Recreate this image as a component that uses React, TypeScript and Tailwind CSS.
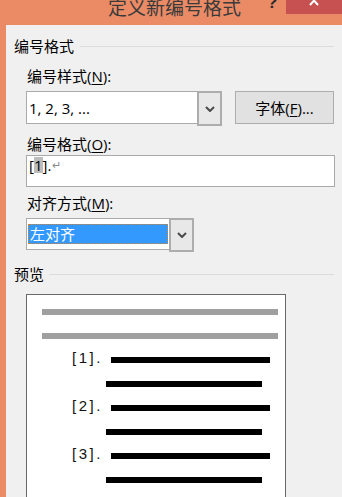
export default function App() {
  const Chevron = () => (
    <svg width="10" height="6" viewBox="0 0 10 6">
      <path d="M1 1 L5 5 L9 1" fill="none" stroke="#4a4a4a" strokeWidth="2" />
    </svg>
  );
  const numbered = ["[1].", "[2].", "[3]."];
  return (
    <div className="w-[342px] h-[497px] overflow-hidden bg-[#EB8B66] flex flex-col font-['Open_Sans','Noto_Sans_CJK_SC',sans-serif] text-[15px] text-black">
      {/* title bar */}
      <div className="h-[25px] shrink-0 flex items-start overflow-hidden">
        <div className="w-[108px] shrink-0" />
        <div className="text-[19px] leading-[19px] -mt-[3px] text-[#3A3A3A] font-['Noto_Sans_CJK_SC',sans-serif] whitespace-nowrap">
          定义新编号格式
        </div>
        <div className="ml-[26px] -mt-[6px] text-[17px] leading-[17px] font-bold text-[#2a2a2a] font-['Liberation_Sans',sans-serif]">
          ?
        </div>
        <div className="ml-auto w-[56px] h-[14px] bg-[#C75050] shrink-0">
          <svg width="56" height="14" viewBox="0 0 56 14">
            <path d="M24 -4 L32 5 M32 -4 L24 5" stroke="#ffffff" strokeWidth="2" />
          </svg>
        </div>
      </div>

      {/* content */}
      <div className="flex-1 ml-[6px] bg-[#F0F0F0] flex flex-col">
        <div className="mt-[11px] h-[20px] flex items-center pl-[8px] pr-[8px]">
          <span className="leading-[20px]">编号格式</span>
          <div className="flex-1 h-px bg-[#DCDCDC] ml-[6px]" />
        </div>

        <div className="mt-[10px] h-[20px] leading-[20px] ml-[21px]">
          编号样式(<span className="underline underline-offset-2">N</span>):
        </div>

        <div className="mt-[5px] ml-[20px] flex items-center">
          <div className="w-[196px] h-[33px] flex bg-white border border-[#ABABAB]">
            <div className="flex-1 flex items-center pl-[2px] leading-[20px]">1, 2, 3, ...</div>
            <div className="w-[21px] h-full border-2 border-[#ADADAD] bg-[#E8E8E8] flex items-center justify-center -my-px -mr-px box-content">
              <Chevron />
            </div>
          </div>
          <div className="ml-[13px] w-[99px] h-[33px] bg-[#E1E1E1] border border-[#ADADAD] flex items-center justify-center leading-[20px]">
            字体(<span className="underline underline-offset-2">F</span>)...
          </div>
        </div>

        <div className="mt-[10px] h-[20px] leading-[20px] ml-[21px]">
          编号格式(<span className="underline underline-offset-2">O</span>):
        </div>

        <div className="mt-px ml-[20px] w-[309px] h-[32px] bg-white border border-[#A9A9A9] pl-[2px] pt-px flex items-start leading-[16px]">
          <span>[</span>
          <span className="bg-[#BDBDBD]">1</span>
          <span>].</span>
          <span className="text-[11px] text-[#8A8A8A] ml-px">↵</span>
        </div>

        <div className="mt-[6px] h-[20px] leading-[20px] ml-[21px]">
          对齐方式(<span className="underline underline-offset-2">M</span>):
        </div>

        <div className="mt-[5px] ml-[20px] w-[168px] h-[32px] flex bg-white border border-[#ABABAB]">
          <div className="flex-1 flex items-center pl-px pr-px">
            <div className="w-full h-[20px] bg-[#3399FF] border border-dotted border-[#D9822B] text-white leading-[18px] pl-[1px] font-['Noto_Sans_CJK_SC',sans-serif]">
              左对齐
            </div>
          </div>
          <div className="w-[21px] h-full border-2 border-[#ADADAD] bg-[#E8E8E8] flex items-center justify-center -my-px -mr-px box-content">
            <Chevron />
          </div>
        </div>

        <div className="mt-[14px] h-[20px] flex items-center pl-[8px] pr-[8px]">
          <span className="leading-[20px]">预览</span>
          <div className="flex-1 h-px bg-[#DCDCDC] ml-[5px]" />
        </div>

        <div className="mt-[10px] ml-[20px] w-[260px] flex-1 bg-white border border-[#6A6A6A] border-b-0 flex flex-col gap-[18px] pt-[14px]">
          <div className="ml-[15px] w-[236px] h-[6px] bg-[#A0A0A0] shrink-0" />
          <div className="ml-[15px] w-[236px] h-[6px] bg-[#A0A0A0] shrink-0" />
          {numbered.map((n) => (
            <div key={n} className="contents">
              <div className="h-[6px] flex items-center shrink-0">
                <span className="ml-[45px] w-[39px] shrink-0 text-[15px] leading-[6px] -mt-[5px] tracking-[2.5px] font-['Liberation_Sans',sans-serif] text-[#111]">
                  {n}
                </span>
                <div className="w-[159px] h-[6px] bg-black" />
              </div>
              <div className="ml-[79px] w-[156px] h-[6px] bg-black shrink-0" />
            </div>
          ))}
        </div>
      </div>
    </div>
  );
}
